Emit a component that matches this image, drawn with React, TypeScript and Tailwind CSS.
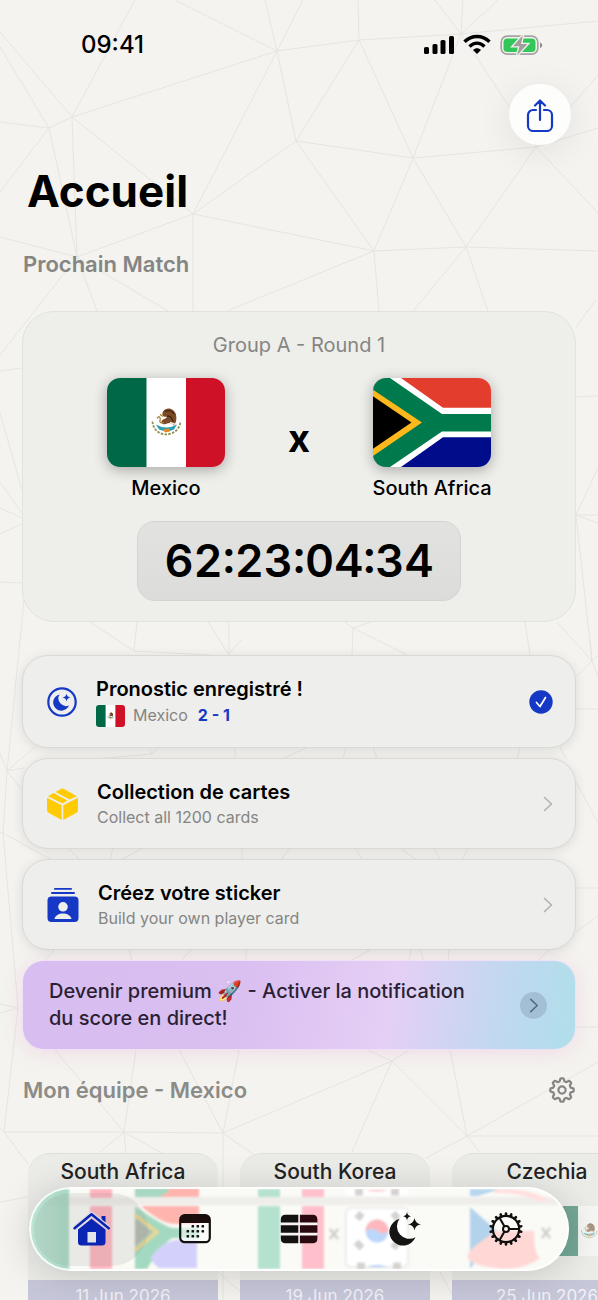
import React from "react";

const MESH =
  "M72 117L135 0M277 51L175 0M277 51L265 0M277 51L303 0M277 51L72 117M277 51L359 40M277 51L296 141M277 51L193 214M359 40L358 0M359 40L461 34M359 40L296 141M359 40L413 158M461 34L435 0M461 34L463 0M461 34L498 0M461 34L598 21M461 34L413 158M461 34L536 147M413 158L296 141M413 158L536 147M413 158L374 251M413 158L466 247M296 141L193 214M296 141L374 251M72 117L193 214M72 117L49 128M72 117L77 257M49 128L77 257M49 128L0 122M49 128L0 192M72 117L0 32M49 128L0 47M193 214L374 251M193 214L77 257M193 214V311M374 251L466 247M536 147L466 247M466 247L598 251M374 251L227 311M374 251L379 311M466 247L413 311M466 247L488 311M536 147L598 128M536 147L598 213M536 147L598 75M77 257L0 237M77 257L0 355M77 257L97 311M77 257L168 311" +
  "M0 371L22 368M0 413L22 490M0 482L22 513M0 508L22 518M0 534L22 524M0 582L22 583M24 600L7 771M596 300L576 327M576 397L598 396M576 515L598 468M576 515H598M576 515L598 523M576 515L592 661" +
  "M90 622L134 651M137 622L134 651M134 651L210 655M229 622V655L208 622M241 640L229 654M345 622L353 628L371 622M353 628L352 655M353 628L407 655M525 622L530 655M557 622L592 661M590 640L592 661L598 655M592 661L598 677M592 661L577 676M576 709H598M7 771L0 753M7 771L35 747M7 771L24 768M7 771L22 790M7 771L3 833L50 859M3 833L0 832M3 833L14 960L18 1008M149 747L152 754L157 748M152 754L95 759M235 747V759M308 747L282 759M346 747L343 759M373 747L377 759M520 747L517 759M560 747L566 759M576 782L598 823M68 848L80 860M113 848L110 860M143 848L120 860M242 848V860M290 848L281 860M355 848L363 860M400 848L417 860M434 848L440 860M468 848L462 860M576 888H598M576 932L598 916M55 949L43 962M129 949L132 962M192 949L180 962M246 949V962M372 949L348 962M411 949L409 962M420 949L424 962M449 949L448 962M550 949L536 962M18 1008L0 1004M18 1008L0 1013M18 1008L4 1132" +
  "M55 1050L124 1132L136 1050M179 1050L223 1133L239 1050M392 1061L223 1133M392 1061L368 1050M392 1061L409 1050M392 1061L351 1154M392 1061L467 1136L450 1050M467 1136L598 1062M576 1027H598M4 1132H124L223 1133V1300M4 1132L28 1164M4 1132L0 1128M124 1132L100 1152M124 1132L126 1154M124 1132L162 1153M223 1133L253 1154M0 1202L28 1197M467 1136L426 1158M467 1136L481 1154M467 1136H598M38 1260V1290M218 1272L250 1300M440 1272L455 1300M75 1260L82 1300M565 1270L580 1300";

function Backdrop() {
  return (
    <svg className="absolute inset-0 h-full w-full" viewBox="0 0 598 1300" preserveAspectRatio="xMidYMin slice" aria-hidden="true">
      <path d={MESH} fill="none" stroke="#e5e5e1" strokeWidth="1" />
    </svg>
  );
}

function MexicoFlag({ className = "" }: { className?: string }) {
  return (
    <svg viewBox="0 0 118 88" preserveAspectRatio="none" className={className} role="img" aria-label="Mexico">
      <path fill="#006847" d="M0 0h40v88H0z" />
      <path fill="#fff" d="M39.500 0h39.500v88h-39.500z" />
      <path fill="#ce1126" d="M79 0h39v88H79z" />
      <path d="M45.500 43c1 17 26 17 28 0" fill="none" stroke="#8d9550" strokeWidth="1.800" strokeDasharray="2.500 1.300" />
      <path d="M49 46q10 6 21 0l-3 5q-7 3-15 0z" fill="#2a9fb0" />
      <path d="M56 51l6-1 1 3-5 1z" fill="#e8862c" />
      <path d="M56 33c4-5 11-3 13 3 1 5 0 8-2 11-2-3-5-3-7-2-3 2-7 0-5-3 1-2 4-1 5-4-3 1-6-1-4-5z" fill="#7b4a26" />
      <path d="M58 33c4-2 8 0 9 3M60 38c3-1 5 1 6 5" fill="none" stroke="#3e2413" strokeWidth="1.200" />
      <path d="M50 40c2-4 4 0 3 2s2 3 4 2M53 36l3 2" fill="none" stroke="#a98437" strokeWidth="1.300" />
      <path d="M63 44l6 2" stroke="#f2e4d0" strokeWidth="1.500" />
    </svg>
  );
}

function SouthAfricaFlag({ className = "" }: { className?: string }) {
  return (
    <svg viewBox="0 0 118 88" preserveAspectRatio="none" className={className} role="img" aria-label="South Africa">
      <path fill="#e23d2d" d="M0 0h118v44H0z" />
      <path fill="#000c8a" d="M0 44h118v44H0z" />
      <path fill="#fff" d="M0 0H28L70 29.500H118V58.500H70L28 88H0z" />
      <path fill="#007a4d" d="M0 0H17L69 35.500H118V53H69L17 88H0z" />
      <path fill="#ffb81c" d="M0 11.500L49 44L0 77z" />
      <path fill="#000" d="M0 18L38.500 44L0 70z" />
    </svg>
  );
}

function KoreaFlag({ className = "" }: { className?: string }) {
  return (
    <svg viewBox="0 0 72 50" preserveAspectRatio="none" className={className} role="img" aria-label="South Korea">
      <path fill="#fff" d="M0 0h72v50H0z" />
      <circle cx="36" cy="25" r="12" fill="#0047a0" />
      <path d="M24 25a12 12 0 0 1 24 0q-6 6-12 0t-12 0z" fill="#cd2e3a" />
      <path d="M10 12l6-6M56 6l6 6M10 38l6 6M56 44l6-6" stroke="#222" strokeWidth="5" />
    </svg>
  );
}

function CzechFlag({ className = "" }: { className?: string }) {
  return (
    <svg viewBox="0 0 72 50" preserveAspectRatio="none" className={className} role="img" aria-label="Czechia">
      <path fill="#fff" d="M0 0h72v25H0z" />
      <path fill="#d7141a" d="M0 25h72v25H0z" />
      <path fill="#11457e" d="M0 0l36 25L0 50z" />
    </svg>
  );
}

function StatusBar() {
  return (
    <div className="flex h-[84px] items-center justify-between pt-[5px] pr-[55px] pl-[81px]">
      <span className="text-[24px] font-medium text-black">09:41</span>
      <svg className="h-[22px] w-[120px]" viewBox="0 0 120 22" aria-label="Signal, Wi-Fi, battery">
        <g>
          <rect x="1" y="13" width="5" height="7" rx="1.600" />
          <rect x="9.500" y="10" width="5" height="10" rx="1.600" />
          <rect x="17.500" y="6" width="5" height="14" rx="1.600" />
          <rect x="26" y="2" width="5" height="18" rx="1.600" />
        </g>
        <path d="M42.500 8.300C49.500 1.300 60.500 1.300 67.500 8.300" transform="translate(-1 -.5)" fill="none" stroke="#000" strokeWidth="3.400" />
        <path d="M46.500 12.500C51 8 57 8 61.500 12.500" fill="none" stroke="#000" strokeWidth="3.300" />
        <path d="M50 16C52.500 13.500 55.500 13.500 58 16L54 20z" />
        <rect x="78.200" y="2.200" width="36.600" height="18" rx="6" fill="none" stroke="#a5a4a2" strokeWidth="1.700" />
        <path d="M117 8.500c3 1 3 4.500 0 5.500z" fill="#8f8e8c" />
        <rect x="80.500" y="4.500" width="32" height="13.500" rx="3.800" fill="#32c759" />
        <path d="M100 1L90 12.200h6.500L94 21.500 104.500 10h-6.500z" fill="#a09f9d" stroke="#f4f3ef" strokeWidth="2.600" paintOrder="stroke" />
      </svg>
    </div>
  );
}

function ShareIcon() {
  return (
    <svg className="h-[34px] w-[28px]" viewBox="0 0 28 34" fill="none" stroke="#1539c4" strokeWidth="2.200" strokeLinecap="round" strokeLinejoin="round" aria-hidden="true">
      <path d="M10 12H7a5 5 0 0 0-5 5v11a5 5 0 0 0 5 5h14a5 5 0 0 0 5-5V17a5 5 0 0 0-5-5h-3M14 22V3M9 7.500L14 2.500 19 7.500" />
    </svg>
  );
}

function MoonBadge() {
  return (
    <svg className="h-[30px] w-[30px]" viewBox="0 0 30 30" aria-hidden="true">
      <circle cx="15" cy="15" r="13.700" fill="none" stroke="#1539c4" strokeWidth="2.200" />
      <path d="M12.500 7.500A8.200 8.200 0 1 0 22 18.500 7.700 7.700 0 0 1 12.500 7.500z" fill="#1539c4" />
      <path d="M19.500 6.500q.4 3.600 4 4-3.600.4-4 4-.4-3.600-4-4 3.600-.4 4-4z" fill="#1539c4" />
    </svg>
  );
}

function BoxIcon() {
  return (
    <svg className="h-8 w-[31px]" viewBox="0 0 31 32" fill="#fecb05" aria-hidden="true">
      <path d="M1 8.200L6.500 5 20.500 12.500 15.500 15.500z" />
      <path d="M8.500 4L14 .9q1.500-.8 3 0L30 8.200 22.500 11.500z" />
      <path d="M0 9.800L14.700 17.300V32L2 25q-2-1-2-3z" />
      <path d="M31 9.800L16.300 17.300V32L29 25q2-1 2-3z" />
    </svg>
  );
}

function StickerIcon() {
  return (
    <svg className="h-[34px] w-8" viewBox="0 0 32 34" fill="#1539c4" aria-hidden="true">
      <rect x="7" y="0" width="18" height="1.800" rx=".9" />
      <rect x="4" y="4" width="24" height="2" rx="1" />
      <path fillRule="evenodd" d="M4.500 8.500h23a4 4 0 0 1 4 4V30a4 4 0 0 1-4 4h-23a4 4 0 0 1-4-4V12.500a4 4 0 0 1 4-4zM16 14a4.800 4.800 0 1 0 0 9.600 4.800 4.800 0 0 0 0-9.600zM7.500 31h17c-1-7.500-16-7.500-17 0z" />
    </svg>
  );
}

function Chevron({ className = "" }: { className?: string }) {
  return (
    <svg className={className} viewBox="0 0 10 16" fill="none" stroke="currentColor" strokeWidth="1.700" strokeLinecap="round" strokeLinejoin="round" aria-hidden="true">
      <path d="M1.500 1.500L8.500 8L1.500 14.500" />
    </svg>
  );
}

function CheckBadge() {
  return (
    <svg className="h-6 w-6" viewBox="0 0 24 24" aria-label="Enregistré" role="img">
      <circle cx="12" cy="12" r="11.700" fill="#1539c4" />
      <path d="M7.500 12.500L11 16.500L16.500 7.500" fill="none" stroke="#fff" strokeWidth="1.700" strokeLinecap="round" strokeLinejoin="round" />
    </svg>
  );
}

function SettingsIcon() {
  const pts: string[] = [];
  for (let i = 0; i < 144; i++) {
    const a = (i / 144) * Math.PI * 2;
    const r = 10.300 + 1.400 * Math.tanh(2.600 * Math.cos(8 * a));
    pts.push(`${(13 + r * Math.sin(a)).toFixed(2)} ${(13 - r * Math.cos(a)).toFixed(2)}`);
  }
  return (
    <svg className="h-[26px] w-[26px]" viewBox="0 0 26 26" fill="none" stroke="#858583" strokeWidth="2.200" strokeLinejoin="round" aria-hidden="true">
      <path d={`M${pts.join("L")}Z`} />
      <circle cx="13" cy="13" r="3.600" />
    </svg>
  );
}

function HouseIcon() {
  return (
    <svg className="h-[34px] w-[38px]" viewBox="0 0 38 34" aria-hidden="true">
      <path d="M28.500 4h4v9l-4-3.500z" fill="#0a24b4" />
      <path d="M5 17.500L18.500 6.800 32.500 17.500V30a3.500 3.500 0 0 1-3.500 3.500H8.500A3.500 3.500 0 0 1 5 30z" fill="#0a24b4" />
      <path d="M14.500 20h8.500v10.500h-8.500z" fill="#e3e3ea" />
      <path d="M1.600 16.200L18.500 2.300 35.700 16.200" fill="none" stroke="#d9dbe6" strokeWidth="5" strokeLinejoin="round" />
      <path d="M1.600 16.200L18.500 2.300 35.700 16.200" fill="none" stroke="#0a24b4" strokeWidth="2.600" strokeLinecap="round" strokeLinejoin="round" />
    </svg>
  );
}

function CalendarIcon() {
  const dots = [[13, 11], [18, 11], [23, 11], [8, 16], [13, 16], [18, 16], [23, 16], [8, 21], [13, 21], [18, 21]];
  return (
    <svg className="h-[30px] w-8" viewBox="0 0 32 30" aria-hidden="true">
      <rect x="1.200" y="1.200" width="29.600" height="27" rx="4.500" fill="#fff" fillOpacity=".5" stroke="#141210" strokeWidth="2.200" />
      <path d="M1 9V5.500Q1 1 5.500 1h21Q31 1 31 5.500V9z" fill="#1c0d0b" />
      {dots.map(([x, y]) => (
        <rect key={`${x}-${y}`} x={x - 0.5} y={y} width="2.600" height="2.600" rx=".7" fill="#141210" />
      ))}
    </svg>
  );
}

function TableIcon() {
  return (
    <svg className="h-[30px] w-[38px]" viewBox="0 0 38 30" aria-hidden="true">
      <path d="M5 .8h28l4 4v20l-4 4H5l-4-4v-20z" fill="#f8f4f2" />
      <path fill="#141210" d="M5.500 .8h12.800v7.800H.8V5.500Q.8.800 5.500 .8zM.8 11.200h17.500v7.600H.8zM.8 21.400h17.500v7.800H5.500Q.8 29.200.8 24.500z" />
      <path fill="#2a0a10" d="M19.900.8H32.700Q37.400.8 37.400 5.500v3.100H19.900zM19.900 11.200h17.500v7.600H19.900zM19.900 21.400h17.500v3.100q0 4.700-4.700 4.700H19.900z" />
    </svg>
  );
}

function MoonIcon() {
  return (
    <svg className="h-[34px] w-9" viewBox="-4 0 36 34" fill="#141412" aria-hidden="true">
      <path d="M10.500 6.800A13.600 13.600 0 1 0 26.500 25.300 12.500 12.500 0 0 1 10.500 6.800z" />
      <path d="M18 0q.5 3.800 4 4.200-3.500.4-4 4.200-.5-3.800-4-4.200 3.500-.4 4-4.200z" />
      <path d="M25.500 6q.8 5.600 6.500 6.300-5.700.7-6.500 6.300-.8-5.600-6.500-6.300 5.700-.7 6.500-6.300z" />
    </svg>
  );
}

function GearIcon() {
  const teeth = Array.from({ length: 18 }, (_, i) => i * 20);
  return (
    <svg className="h-[34px] w-[34px]" viewBox="0 0 34 34" fill="none" stroke="#11100f" aria-hidden="true">
      <circle cx="17" cy="17" r="13.200" strokeWidth="2.200" />
      {teeth.map((a) => (
        <path key={a} d="M17 3.500V1.500" strokeWidth="2.600" strokeLinecap="round" transform={`rotate(${a} 17 17)`} />
      ))}
      <circle cx="17" cy="17" r="3" strokeWidth="2" />
      <path d="M20 17H30M15.500 14.400L10.500 5.700M15.500 19.600L10.500 28.300" strokeWidth="2.100" />
    </svg>
  );
}

function LinkRow({ icon, title, children, end }: { icon: React.ReactNode; title: string; children: React.ReactNode; end: React.ReactNode }) {
  return (
    <a href="#" className="flex items-center gap-[19px] rounded-[26px] border border-[#d9d9d6] bg-[#eeeeec] py-[19px] pr-[22px] pl-6 shadow-[0_2px_12px_rgba(0,0,0,0.1)]">
      {icon}
      <span className="flex-1">
        <span className="block text-[20px] leading-[28px] font-semibold text-black">{title}</span>
        {children}
      </span>
      {end}
    </a>
  );
}

function FixtureCard({ team, date, flags }: { team: string; date: string; flags: [React.ReactNode, React.ReactNode] }) {
  return (
    <article className="w-[190px] shrink-0 overflow-hidden rounded-t-[22px] border-t border-[#dededb] bg-[#ebebe8]">
      <h3 className="pt-1 text-center text-[21px] leading-7 font-medium text-[#222]">{team}</h3>
      <div className="mt-5 flex h-[50px] items-center justify-between px-5 opacity-50">
        {flags[0]}
        <span className="text-sm">x</span>
        {flags[1]}
      </div>
      <p className="mt-6 h-24 bg-[#c7c7da] pt-1 text-center text-[17px] leading-6 text-[#f1f1f6]">{date}</p>
    </article>
  );
}

function Refraction() {
  return (
    <svg className="absolute inset-0 h-full w-full" viewBox="0 0 540 84" preserveAspectRatio="none" aria-hidden="true">
      <defs>
        <filter id="soft" x="-5%" y="-5%" width="110%" height="110%">
          <feGaussianBlur stdDeviation="1.200" />
        </filter>
        <linearGradient id="green" x1="0" x2="1">
          <stop offset="0" stopColor="#a9dcc8" />
          <stop offset="1" stopColor="#8bccb2" />
        </linearGradient>
      </defs>
      <g filter="url(#soft)">
        <path d="M0 10h540v8H0z" fill="#efeeeb" />
        <path d="M0 0h40v84H0z" fill="url(#green)" opacity=".75" />
        <path d="M61 2h22v9H61zM61 19h22v63H61z" fill="#ffb4bf" />
        <path d="M106 1h64v9h-64z" fill="#ffb5ae" />
        <path d="M106 1h30q10 2-6 9h-24z" fill="#a7d8c1" />
        <path d="M112 19h58v18h-26q-14-2-32-18z" fill="#ffb5ae" />
        <path d="M106 19q28 20 38 22h26v10h-26q-10 4-26 31h-12z" fill="#a4d9c1" />
        <path d="M122 70q12-16 26-17h20v28h-38q-8-5-8-11z" fill="#d3d1fb" />
        <path d="M106 28l22 17-22 18" fill="none" stroke="#f5d686" strokeWidth="3" />
        <path d="M106 31l17 14-17 14z" fill="#b5bab0" />
        <path d="M229 2h22v8h-22zM229 19h22v63h-22z" fill="#b4e2cf" />
        <path d="M273 2h22v8h-22zM273 19h22v63h-22z" fill="#ffc0cb" />
        <path d="M316 2h64v6h-64z" fill="#fff" />
        <rect x="317" y="21" width="62" height="59" rx="5" fill="#fff" stroke="#ecebe9" strokeWidth="2" />
        <path d="M337 3q11 3 22 0z" fill="#ffb4b9" />
        <circle cx="348" cy="44" r="11.500" fill="#bcd7fb" />
        <path d="M336.500 44a11.500 11.500 0 0 1 23 0q-5 5-11 0t-12 0z" fill="#ffb7be" />
        <path d="M328 32l5-6M364 26l5 6M327 55l6 6M364 61l5-6M328 79h8M364 79h8M326 5h8M362 5h8" stroke="#d4d3d1" strokeWidth="7" />
        <path d="M338 80q10-4 20 0z" fill="#a9caf8" />
        <path d="M441 2h30l-22 7h-8z" fill="#b6d6ef" />
        <path d="M465 3q30-4 55 10l-8 2q-20-10-47-9z" fill="#ffe0df" />
        <path d="M441 20l27 24-27 38z" fill="#b3d3ec" />
        <path d="M466 44h39q0 24 6 27-12 10-34 11-54-4-32-22z" fill="#ffd8d5" />
        <path d="M301 42l8 10m0-10l-8 10M513 41l8 10m0-10l-8 10" stroke="#cfcecb" strokeWidth="2.500" />
      </g>
    </svg>
  );
}

const TABS = [
  { label: "Accueil", icon: <HouseIcon /> },
  { label: "Calendrier", icon: <CalendarIcon /> },
  { label: "Groupes", icon: <TableIcon /> },
  { label: "Pronostics", icon: <MoonIcon /> },
  { label: "Réglages", icon: <GearIcon /> },
];

function TabBar() {
  return (
    <nav className="absolute inset-x-[29px] bottom-[29px] h-[84px] overflow-hidden rounded-full bg-[#fafaf6]">
      <Refraction />
      <span className="absolute top-[6px] left-[5px] h-[73px] w-[114px] rounded-full bg-[#8a8a86]/15" />
      <div className="relative flex h-full items-center pr-[11px] pl-[11px]">
        {TABS.map((t) => (
          <button key={t.label} type="button" aria-label={t.label} className="flex flex-1 items-center justify-center">
            {t.icon}
          </button>
        ))}
      </div>
      <span className="pointer-events-none absolute inset-0 rounded-full border-2 border-white/90" />
    </nav>
  );
}

const SMALL_FLAG = "h-[50px] w-[66px]";

export default function App() {
  return (
    <div className="relative h-screen overflow-hidden bg-[#f4f3ef] font-[Inter,'Liberation_Sans',sans-serif]">
      <Backdrop />
      <main className="relative h-full overflow-y-auto [scrollbar-width:none]">
        <StatusBar />
        <div className="flex justify-end pr-[27px]">
          <button type="button" aria-label="Partager" className="flex h-[61px] w-[62px] items-center justify-center rounded-full bg-[#fdfdfb] shadow-[0_6px_36px_rgba(0,0,0,0.08)]">
            <ShareIcon />
          </button>
        </div>
        <h1 className="mt-[19px] pl-[27px] text-[44px] leading-[54px] font-bold text-black">Accueil</h1>
        <div className="px-[22px]">
          <h2 className="mt-8 px-px text-[22px] leading-7 font-semibold text-[#858583]">Prochain Match</h2>

          <section className="mt-[33px] flex h-[311px] flex-col items-center rounded-[32px] border border-[#e2e2df] bg-[#eeeeeb] pt-[19px]">
            <p className="text-[20px] leading-7 text-[#858583]">Group A - Round 1</p>
            <div className="mt-[19px] grid w-full grid-cols-[1fr_120px_1fr] px-[70px]">
              <div className="flex flex-col items-center">
                <MexicoFlag className="h-[89px] w-[118px] rounded-[13px] shadow-[0_3px_14px_rgba(0,0,0,0.3)]" />
                <span className="mt-[7px] text-[20px] leading-7 font-medium text-black">Mexico</span>
              </div>
              <span className="pt-10 text-center text-[38px] leading-10 font-bold text-black">x</span>
              <div className="flex flex-col items-center">
                <SouthAfricaFlag className="h-[89px] w-[118px] rounded-[13px] shadow-[0_3px_14px_rgba(0,0,0,0.3)]" />
                <span className="mt-[7px] text-[20px] leading-7 font-medium whitespace-nowrap text-black">South Africa</span>
              </div>
            </div>
            <div className="mt-[19px] rounded-[18px] border border-[#d3d3d1] bg-linear-to-b from-[#e2e2e0] to-[#dcdcda] px-[26px] py-3 text-[45px] leading-[54px] font-semibold text-black tabular-nums">
              62:23:04:34
            </div>
          </section>

          <div className="mt-[33px] flex flex-col gap-[10px]">
            <LinkRow icon={<MoonBadge />} title="Pronostic enregistré !" end={<CheckBadge />}>
              <span className="flex items-center text-[16px] leading-[25px] text-[#858583]">
                <MexicoFlag className="mr-2 h-[22px] w-[29px] rounded-[3px]" />
                Mexico
                <b className="ml-[10px] font-bold text-[#1539c4]">2 - 1</b>
              </span>
            </LinkRow>
            <LinkRow icon={<BoxIcon />} title="Collection de cartes" end={<Chevron className="h-4 w-[10px] text-[#b3b3b1]" />}>
              <span className="block text-[16px] leading-[23px] text-[#858583]">Collect all 1200 cards</span>
            </LinkRow>
            <LinkRow icon={<StickerIcon />} title="Créez votre sticker" end={<Chevron className="h-4 w-[10px] text-[#b3b3b1]" />}>
              <span className="block text-[16px] leading-[23px] text-[#858583]">Build your own player card</span>
            </LinkRow>
            <a href="#" className="flex h-[90px] items-center gap-8 rounded-[22px] border border-[#efe2f6] bg-linear-[100deg,#d7bdf0_0%,#dabff1_40%,#e5cff5_66%,#bdd9f0_88%,#b0dfe9_100%] pr-7 pl-[26px] shadow-[0_3px_20px_rgba(230,150,210,0.25)]">
              <span className="flex-1 text-[20px] leading-[27px] font-medium text-[#2a1f33]">
                Devenir premium 🚀 - Activer la notification du score en direct!
              </span>
              <span className="flex h-[27px] w-[27px] items-center justify-center rounded-full bg-[#a3bfd6]">
                <Chevron className="h-[15px] w-[10px] text-[#566a80]" />
              </span>
            </a>
          </div>

          <div className="mt-[26px] flex items-center justify-between px-px">
            <h2 className="text-[22px] leading-7 font-semibold text-[#8b8b88]">Mon équipe - Mexico</h2>
            <button type="button" aria-label="Choisir une équipe">
              <SettingsIcon />
            </button>
          </div>
        </div>

        <div className="mt-[49px] flex gap-[22px] overflow-hidden pl-7">
          <FixtureCard team="South Africa" date="11 Jun 2026" flags={[<MexicoFlag key="a" className={SMALL_FLAG} />, <SouthAfricaFlag key="b" className={SMALL_FLAG} />]} />
          <FixtureCard team="South Korea" date="19 Jun 2026" flags={[<MexicoFlag key="a" className={SMALL_FLAG} />, <KoreaFlag key="b" className={SMALL_FLAG} />]} />
          <FixtureCard team="Czechia" date="25 Jun 2026" flags={[<CzechFlag key="a" className={SMALL_FLAG} />, <MexicoFlag key="b" className={SMALL_FLAG} />]} />
        </div>
      </main>
      <div className="pointer-events-none absolute inset-x-[29px] bottom-[29px] h-[84px] rounded-full shadow-[0_4px_36px_rgba(0,0,0,0.16)]" />
      <TabBar />
    </div>
  );
}
